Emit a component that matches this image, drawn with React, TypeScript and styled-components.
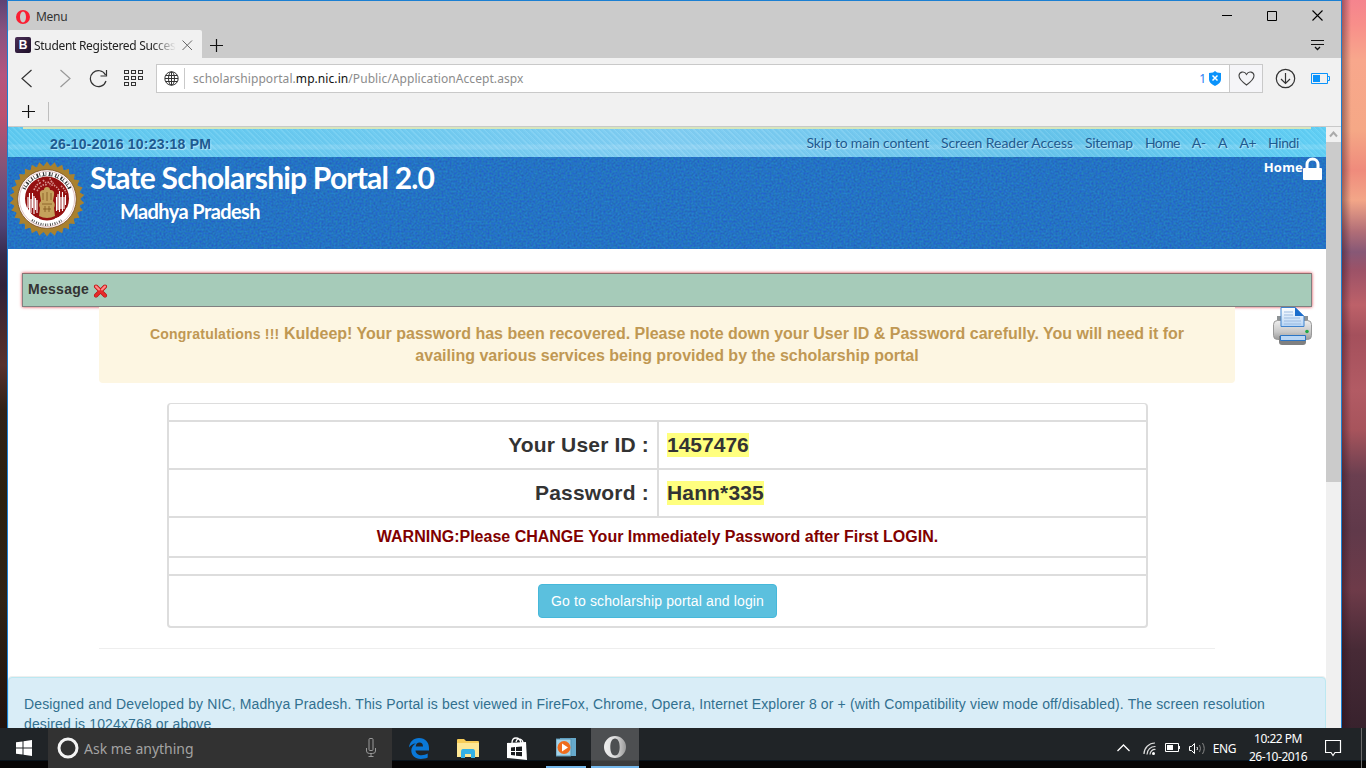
import React from "react";
import styled, { createGlobalStyle } from "styled-components";

const ui = '"Noto Sans", "Open Sans", sans-serif';
const arial = '"Liberation Sans", Arial, sans-serif';
const display = 'Lato, "Noto Sans", sans-serif';

const Global = createGlobalStyle`
  * { box-sizing: border-box; }
  html, body { margin: 0; height: 768px; overflow: hidden; }
  body { font-family: ${arial}; }
  svg { display: block; flex: none; }
`;

const Text = styled.span<{ $size: number; $font?: string; $spacing?: number; $weight?: number; $color?: string }>`
  font-family: ${(p) => p.$font ?? arial};
  font-size: ${(p) => p.$size}px;
  letter-spacing: ${(p) => p.$spacing ?? 0}px;
  font-weight: ${(p) => p.$weight ?? 400};
  color: ${(p) => p.$color ?? "inherit"};
  white-space: nowrap;
`;

const Desktop = styled.div`
  width: 1366px;
  height: 768px;
  display: flex;
  flex-direction: column;
  overflow: hidden;
`;
const Stage = styled.div`
  height: 728px;
  display: grid;
  grid-template-columns: 7px 1335px 24px;
`;
const WallLeft = styled.div`
  background: linear-gradient(#5d4374 0, #87527f 30px, #b4557f 75px, #bb5270 115px, #875477 165px, #504375 225px, #372b4c 255px, #30213a 285px, #4a2b2d 335px, #57312e 365px, #302218 410px, #2b200e 500px, #302316 600px, #21130d 728px);
`;
const WallRight = styled.div`
  background:
    linear-gradient(90deg, rgba(40, 10, 20, 0.4), transparent 9px),
    linear-gradient(#f5848e 0, #f88f8a 25px, #f8a78c 60px, #f5a886 130px, #ef8b7c 170px, #f3a688 200px, #b06d77 232px, #875876 252px, #9c5267 270px, #bd6169 305px, #a4505c 335px, #b25b64 390px, #a7545c 430px, #6b3f50 475px, #60394a 530px, #6e3b49 590px, #472a36 650px, #38222d 728px);
`;
const Window = styled.div`
  border: 1px solid #1b7fd2;
  border-bottom: 0;
  display: flex;
  flex-direction: column;
  background: #f1f1f1;
  min-height: 0;
  overflow: hidden;
`;
const TitleBar = styled.div`
  height: 29px;
  background: #cbcbcb;
  display: flex;
  align-items: center;
  padding: 2px 17px 0 8px;
  gap: 6px;
`;
const WindowButtons = styled.div`
  margin: -2px 0 0 auto;
  display: flex;
  gap: 34px;
`;
const TabRow = styled.div`
  height: 28px;
  background: #cbcbcb;
  display: flex;
  align-items: center;
`;
const Tab = styled.div`
  width: 194px;
  height: 28px;
  background: #f1f1f1;
  border-radius: 2px 2px 0 0;
  display: flex;
  align-items: center;
  padding: 2px 0 0 7px;
`;
const Favicon = styled.div`
  width: 16px;
  height: 16px;
  border-radius: 2px;
  background: linear-gradient(135deg, #4b2f57, #1d0f28);
  color: #fff;
  font: bold 12px/16px ${arial};
  text-align: center;
  margin-right: 3px;
`;
const TabTitle = styled.div`
  width: 142px;
  overflow: hidden;
  line-height: 18px;
  mask-image: linear-gradient(90deg, #000 118px, transparent 142px);
`;
const TabClose = styled.div` margin-left: 6px; `;
const NewTab = styled.div` padding: 3px 0 0 8px; `;
const TabMenu = styled.div` margin: 0 17px 0 auto; `;
const Toolbar = styled.div`
  height: 41px;
  display: flex;
  align-items: center;
  padding: 0 10px 0 12px;
`;
const NavIcons = styled.div`
  width: 136px;
  display: grid;
  grid-template-columns: 39px 30px 34px 20px;
  align-items: center;
`;
const AddressBar = styled.div`
  width: 1107px;
  height: 29px;
  border: 1px solid #c9c9c9;
  background: #fff;
  display: flex;
  align-items: center;
  color: #8c8c8c;
`;
const GlobeCell = styled.div`
  width: 28px;
  height: 21px;
  border-right: 1px solid #c9c9c9;
  display: flex;
  align-items: center;
  padding-left: 7px;
  margin-right: 8px;
`;
const Blocked = styled.div`
  margin-left: auto;
  display: flex;
  align-items: center;
  gap: 3px;
  margin-right: 8px;
`;
const HeartCell = styled.div`
  width: 33px;
  height: 27px;
  border-left: 1px solid #c9c9c9;
  background: #f5f5f8;
  display: grid;
  place-items: center;
`;
const BookmarkBar = styled.div`
  height: 28px;
  display: flex;
  align-items: center;
  padding: 0 14px 2px;
  border-bottom: 1px solid #c9c9c9;
`;
const BarDivider = styled.div`
  width: 1px;
  height: 19px;
  background: #bebebe;
  margin-left: 12px;
`;
const Viewport = styled.div`
  flex: 1;
  min-height: 0;
  display: flex;
`;
const Page = styled.div`
  width: 1318px;
  background: #fff;
  overflow: hidden;
`;
const ScrollTrack = styled.div`
  width: 15px;
  background: #f0f0f0;
`;
const ScrollUp = styled.div`
  height: 15px;
  display: grid;
  place-items: center;
`;
const ScrollThumb = styled.div`
  height: 340px;
  background: #cbcbcb;
`;
const TopStrip = styled.div`
  height: 30px;
  padding-top: 2px;
  background:
    linear-gradient(90deg, transparent 15px, #d6e6bd 15px 1303px, transparent 1303px) 0 0 / 100% 2px no-repeat,
    repeating-linear-gradient(45deg, rgba(255, 255, 255, 0.08) 0 1px, rgba(20, 120, 180, 0.05) 1px 3px, transparent 3px 4px),
    linear-gradient(transparent 17px, rgba(255, 255, 255, 0.13) 18px 22px, transparent 23px),
    linear-gradient(90deg, #60cbf1, #6fccf1 25%, #84cff3 50%, #69c6ec 80%, #62d0f5);
`;
const StripInner = styled.div`
  height: 28px;
  display: flex;
  align-items: center;
  padding: 2px 27px 0 42px;
  color: #1d5a90;
  text-shadow: 1px 1px 1px rgba(255, 255, 255, 0.5);
`;
const SkipLinks = styled.nav`
  margin: -4px 0 0 auto;
  display: flex;
  gap: 12px;
`;
const Header = styled.header`
  position: relative;
  height: 92px;
  background: #2573c5;
  color: #fff;
  display: flex;
  padding: 4px 4px 0 1px;
`;
const Grain = styled.svg`
  position: absolute;
  inset: 0;
  opacity: 0.2;
`;
const EmblemBox = styled.div` position: relative; `;
const Titles = styled.div`
  position: relative;
  display: flex;
  flex-direction: column;
  padding-left: 5px;
  margin-top: -1px;
  & > :first-child { line-height: 34px; }
  & > :last-child { line-height: 34px; padding-left: 30px; }
`;
const HomeLink = styled.div`
  position: relative;
  margin-left: auto;
  display: flex;
  height: 22px;
  margin-top: -4px;
  line-height: 21px;
`;
const MessageBar = styled.div`
  height: 34px;
  margin: 24px 14px 0;
  border: 1px solid #808080;
  border-top-color: #8f6d6d;
  box-shadow: 0 0 3px #dc3c46;
  background: #a6cbb9;
  display: flex;
  align-items: center;
  gap: 4px;
  padding: 0 0 2px 5px;
  color: #333;
`;
const DismissIcon = styled.svg` margin-top: 4px; `;
const NoticeRow = styled.div`
  display: flex;
  justify-content: space-between;
  padding: 0 14px 0 91px;
`;
const Notice = styled.div`
  width: 1136px;
  height: 76px;
  border-radius: 0 0 4px 4px;
  background: #fdf6e2;
  color: #c09853;
  text-align: center;
  padding-top: 16px;
  line-height: 22px;
`;
const Credentials = styled.table`
  width: 981px;
  height: 225px;
  margin: 20px 0 0 159px;
  border: 2px solid #ddd;
  border-top-width: 1px;
  border-radius: 4px;
  border-spacing: 0;
  color: #333;
  table-layout: fixed;
`;
const Row = styled.tr<{ $h: number }>`
  height: ${(p) => p.$h}px;
  &:not(:first-child) td { border-top: 2px solid #ddd; }
`;
const LabelColumn = styled.col` width: 488px; `;
const Cell = styled.td<{ $align?: string; $split?: boolean }>`
  padding: 0 8px;
  text-align: ${(p) => p.$align ?? "left"};
  border-left: ${(p) => (p.$split ? "2px solid #ddd" : "0")};
`;
const Mark = styled.mark`
  display: inline-block;
  background: #ffff7f;
  color: #333;
  height: 24px;
  line-height: 24px;
  vertical-align: middle;
`;
const LoginButton = styled.button`
  width: 239px;
  height: 34px;
  border: 1px solid #46b8da;
  border-radius: 4px;
  background: #5bc0de;
  color: #fff;
  padding: 0;
  display: block;
  margin: 0 auto;
`;
const Rule = styled.div`
  height: 1px;
  background: #eee;
  margin: 20px 111px 0 91px;
`;
const Footer = styled.footer`
  height: 90px;
  margin-top: 28px;
  border: 1px solid #bce8f1;
  box-shadow: 0 -1px 0 #eee;
  border-radius: 4px;
  background: #d9edf7;
  color: #31708f;
  padding: 16px 15px;
  line-height: 20px;
`;
const Taskbar = styled.div`
  height: 40px;
  display: flex;
  background: linear-gradient(#202427 32px, #0b2233 32px, #060505 33px);
  color: #fff;
`;
const Start = styled.div`
  width: 48px;
  display: grid;
  place-items: center;
`;
const Search = styled.div`
  width: 344px;
  background: #323232;
  display: flex;
  align-items: center;
  padding: 0 14px 0 9px;
  gap: 5px;
  color: #a3a3a3;
`;
const Mic = styled.div` margin-left: auto; `;
const AppSlot = styled.div<{ $w: number; $active?: boolean; $open?: boolean }>`
  width: ${(p) => p.$w}px;
  display: grid;
  place-items: center;
  background: ${(p) => (p.$active ? "linear-gradient(#4d4f51 32px, #3c3c3c 33px)" : "none")};
  border-bottom: ${(p) => (p.$open || p.$active ? "2px solid #76b9ed" : "0")};
`;
const Spacer = styled.div<{ $w: number }>` width: ${(p) => p.$w}px; `;
const Tray = styled.div`
  margin-left: auto;
  display: flex;
  align-items: center;
  padding-right: 19px;
`;
const TrayIcons = styled.div`
  display: flex;
  align-items: center;
  gap: 9px;
  margin-right: 7px;
  & > :first-child { margin-right: 4px; }
`;
const Clock = styled.div`
  width: 60px;
  margin: 0 17px 1px 12px;
  display: flex;
  flex-direction: column;
  align-items: center;
  line-height: 18px;
`;
const ShowDesktop = styled.div`
  width: 5px;
  border-left: 1px solid #6b6b6b;
`;

const Plus = () => (
  <svg width="14" height="14"><path d="M0 6.5H13M6.5 0V13" stroke="#111" strokeWidth="1.2" /></svg>
);

const skipLinks: [string, number][] = [
  ["Skip to main content", -0.2],
  ["Screen Reader Access", -0.05],
  ["Sitemap", -0.23],
  ["Home", -0.6],
  ["A-", -0.3],
  ["A", 0],
  ["A+", -0.5],
  ["Hindi", -0.4],
];

const Emblem = () => {
  const teeth = Array.from({ length: 60 }, (_, i) => {
    const a = (i * Math.PI) / 30;
    const r = i % 2 ? 33 : 37.5;
    return `${38 + r * Math.sin(a)},${38 - r * Math.cos(a)}`;
  }).join(" ");
  return (
    <svg width="76" height="76" viewBox="0 0 76 76">
      <polygon points={teeth} fill="#a9812f" />
      <circle cx="38" cy="38" r="33.5" fill="#a9812f" />
      <circle cx="38" cy="38" r="29.3" fill="#fff" stroke="#7a4a22" strokeWidth=".8" />
      <circle cx="38" cy="38" r="27.6" fill="none" stroke="#c99" strokeWidth=".6" />
      <path d="M15 28A25 25 0 0 1 61 28" fill="none" stroke="#333" strokeWidth="3.6" strokeDasharray="1.2 1.5 .7 2.6 1.6 1.3 .8 2.8" />
      <path d="M17 26.5A24.500 24.500 0 0 1 59 26.5" fill="none" stroke="#333" strokeWidth=".8" strokeDasharray="4 2.600" />
      <path d="M23 59A26 26 0 0 0 53 59" fill="none" stroke="#444" strokeWidth="2.600" strokeDasharray="1 1.300 .7 1.700" />
      <circle cx="38" cy="37.500" r="22" fill="#941010" />
      <path d="M25 29q3-7 7-7m-4 8q5-8 10-6m3-7q1 5 5 6m-12-4q3 4 6 2m10 8q-5-7-9-4m11 0q4 3 5 7M29 19l3 4m11-3l-3 4" stroke="#d99792" strokeWidth="1.600" fill="none" strokeDasharray="1.500 1.200" />
      <path d="M19 36v11m1.500-15v19m1.500-13v14m1.500-20v15m1.500-12v18m1.500-16v12m1.500-10v13M47.500 36v14m1.500-17v16m1.500-19v21m1.500-15v12m1.500-17v19m1.500-14v12m1.500-14v10" stroke="#fff" strokeWidth="1.100" />
      <path d="M17 47q4 10 13 12M59 47q-4 10-13 12" stroke="#fff" strokeWidth="3" fill="none" />
      <path d="M31 34q-1-5 4-5q0-3 3-3t3 3q5 0 4 5l-1 6q3 3 1 7l1 8q-8 4-16 0l1-8q-2-4 1-7z" fill="#c5a25c" />
      <path d="M34 32v7m4-8v9m4-8v7m-9 4h10m-9 5h8m-6-3v6m4-6v6" stroke="#80551f" strokeWidth=".8" />
    </svg>
  );
};

const Printer = () => (
  <svg width="39" height="39" viewBox="0 0 39 39">
    <defs>
      <linearGradient id="pb" x1="0" y1="0" x2="0" y2="1"><stop offset="0" stopColor="#eee" /><stop offset=".6" stopColor="#c8c8c8" /><stop offset="1" stopColor="#9a9a9a" /></linearGradient>
      <linearGradient id="pp" x1="0" y1="0" x2="0" y2="1"><stop offset="0" stopColor="#fff" /><stop offset="1" stopColor="#b5d4f5" /></linearGradient>
    </defs>
    <path d="M4 9h31v6H4z" fill="#8d9294" />
    <rect x=".5" y="13.500" width="38" height="19" rx="4" fill="url(#pb)" stroke="#999" />
    <path d="M8 .5h14l9 9v10H8z" fill="url(#pp)" stroke="#3f83ce" />
    <path d="M22 0v9h9z" fill="#1b6dcc" />
    <path d="M11 5h9M11 8h9M11 11h16M11 14h17M11 17h17" stroke="#9dbbe0" />
    <circle cx="34" cy="24.500" r="1.800" fill="#20a845" />
    <path d="M6 29h27v6q0 3-3 3H9q-3 0-3-3z" fill="#808080" />
    <path d="M7.500 28.500h25v5h-25z" fill="#b9d6f4" stroke="#2a75c5" />
  </svg>
);

export default function App() {
  return (
    <Desktop>
      <Global />
      <Stage>
        <WallLeft />
        <Window>
          <TitleBar>
            <svg width="14" height="14" viewBox="0 0 14 14"><path fillRule="evenodd" fill="#fa1e32" d="M7 0a7 7 0 1 0 0 14A7 7 0 0 0 7 0zM7 1.500c1.700 0 3 2.200 3 5.500s-1.300 5.500-3 5.500S4 10.300 4 7s1.300-5.500 3-5.500z" /></svg>
            <Text $size={12} $font={ui} $spacing={-0.3} $color="#333">Menu</Text>
            <WindowButtons>
              <svg width="11" height="11"><path d="M0 5.500H10" stroke="#000" /></svg>
              <svg width="11" height="11"><path d="M.5 1.500H9.500V10.500H.5z" fill="none" stroke="#000" /></svg>
              <svg width="12" height="11"><path d="M.5.5L10.500 10.500M10.500.5L.5 10.500" stroke="#000" strokeWidth="1.100" /></svg>
            </WindowButtons>
          </TitleBar>
          <TabRow>
            <Tab>
              <Favicon>B</Favicon>
              <TabTitle><Text $size={12} $font={ui} $spacing={-0.3} $color="#222">Student Registered Success</Text></TabTitle>
              <TabClose><svg width="11" height="11"><path d="M.5.5L10 10M10 .5L.5 10" stroke="#666" /></svg></TabClose>
            </Tab>
            <NewTab><Plus /></NewTab>
            <TabMenu>
              <svg width="13" height="13"><path d="M0 2.500H13M0 6.500H13" stroke="#111" /><path d="M4 9l2.500 2.500L9 9" fill="none" stroke="#111" strokeWidth="1.300" /></svg>
            </TabMenu>
          </TabRow>
          <Toolbar>
            <NavIcons>
              <svg width="13" height="19"><path d="M11.500 1L2 9.500l9.500 8.500" fill="none" stroke="#333" strokeWidth="1.200" /></svg>
              <svg width="13" height="19"><path d="M1.500 1L11 9.500 1.500 18" fill="none" stroke="#999" strokeWidth="1.200" /></svg>
              <svg width="19" height="19"><path d="M16.500 6A8 8 0 1 0 17 12M17.500 1v6h-6" fill="none" stroke="#333" strokeWidth="1.200" /></svg>
              <svg width="20" height="17">
                {[0, 1, 2].flatMap((r) => [0, 1, 2].map((c) => r === 2 && c === 2 ? null : <rect key={`${r}${c}`} x={c * 7 + 1.5} y={r * 6 + 0.5} width="4" height="3" fill="none" stroke="#333" />))}
              </svg>
            </NavIcons>
            <AddressBar>
              <GlobeCell>
                <svg width="15" height="15"><g fill="none" stroke="#333" strokeWidth="1"><circle cx="7.500" cy="7.500" r="6.700" /><ellipse cx="7.500" cy="7.500" rx="3" ry="6.700" /><path d="M7.500 1v13M1 7.500h13M2 4.500h11M2 10.500h11" /></g></svg>
              </GlobeCell>
              <Text $size={12} $font={ui} $spacing={0.07}>scholarshipportal.<Text $size={12} $font={ui} $spacing={0.07} $color="#111">mp.nic.in</Text>/Public/ApplicationAccept.aspx</Text>
              <Blocked>
                <Text $size={12} $font={ui} $color="#2b7cf5">1</Text>
                <svg width="12" height="15"><path d="M6 0l2 1.500L12 2v6.500q0 3.500-6 6.500-6-3-6-6.500V2l4-.5z" fill="#0a93fb" /><path d="M3.500 4.500l5 5m0-5l-5 5" stroke="#fff" strokeWidth="1.500" /></svg>
              </Blocked>
              <HeartCell><svg width="17" height="15"><path d="M8.500 14Q1 8.500 1 4.800C1 .8 6.300-.6 8.500 3.400 10.700-.6 16 .8 16 4.800 16 8.500 8.500 14 8.500 14z" fill="none" stroke="#444" strokeWidth="1.100" /></svg></HeartCell>
            </AddressBar>
            <Spacer $w={12} />
            <svg width="21" height="21"><g fill="none" stroke="#333" strokeWidth="1.200"><circle cx="10.500" cy="10.500" r="9.200" /><path d="M10.500 5v10M6 11l4.500 4.500L15 11" /></g></svg>
            <Spacer $w={15} />
            <svg width="19" height="11"><path d="M.5.5h16v10H.5zM17 3.500h1.500v4H17" fill="none" stroke="#0a93fb" /><path d="M2 2h7v7H2z" fill="#0a93fb" /></svg>
          </Toolbar>
          <BookmarkBar><Plus /><BarDivider /></BookmarkBar>
          <Viewport>
            <Page>
              <TopStrip>
                <StripInner>
                  <Text $size={14} $weight={700} $spacing={0.21}>26-10-2016 10:23:18 PM</Text>
                  <SkipLinks>
                    {skipLinks.map(([label, spacing]) => (
                      <Text key={label} $size={14} $font={display} $spacing={spacing}>{label}</Text>
                    ))}
                  </SkipLinks>
                </StripInner>
              </TopStrip>
              <Header>
                <Grain width="1318" height="92">
                  <filter id="grain" colorInterpolationFilters="sRGB"><feTurbulence type="fractalNoise" baseFrequency=".5" numOctaves="2" /><feColorMatrix values="0 0 0 0 .14  0 1.200 0 0 -.15  0 0 1 0 .25  0 0 0 0 1" /></filter>
                  <rect width="1318" height="92" filter="url(#grain)" />
                </Grain>
                <EmblemBox><Emblem /></EmblemBox>
                <Titles>
                  <Text $size={30} $font={display} $weight={700} $spacing={-0.8}>State Scholarship Portal 2.0</Text>
                  <Text $size={20} $font={display} $weight={700} $spacing={-0.59}>Madhya Pradesh</Text>
                </Titles>
                <HomeLink>
                  <Text $size={13} $font={ui} $weight={700} $spacing={0.2}>Home</Text>
                  <svg width="19" height="23" viewBox="0 0 19 23"><path d="M4 12V7.500a5.500 5.500 0 0 1 11 0V12" fill="none" stroke="#fff" strokeWidth="3" /><rect x="0" y="11" width="19" height="12" rx="1" fill="#fff" /></svg>
                </HomeLink>
              </Header>
              <MessageBar>
                <Text $size={14} $weight={700} $spacing={0.28}>Message</Text>
                <DismissIcon width="15" height="14"><path d="M3 2.500l9 9M12 2.500l-9 9" stroke="#b41010" strokeWidth="4" strokeLinecap="round" /><path d="M3 2.500l9 9M12 2.500l-9 9" stroke="#e62a2a" strokeWidth="3" strokeLinecap="round" /><path d="M3 2.500l3 3M12 2.500l-3 3" stroke="#ff8a8a" strokeWidth="2" strokeLinecap="round" /></DismissIcon>
              </MessageBar>
              <NoticeRow>
                <Notice>
                  <Text $size={14} $weight={700} $spacing={0.23}>Congratulations !!!</Text>{" "}
                  <Text $size={16} $weight={700}>Kuldeep! Your password has been recovered. Please note down your User ID &amp; Password carefully. You will need it for</Text>
                  <br />
                  <Text $size={16} $weight={700}>availing various services being provided by the scholarship portal</Text>
                </Notice>
                <Printer />
              </NoticeRow>
              <Credentials>
                <colgroup><LabelColumn /><col /></colgroup>
                <tbody>
                  <Row $h={16}><Cell colSpan={2} /></Row>
                  <Row $h={48}>
                    <Cell $align="right"><Text $size={21} $weight={700} $spacing={0.17}>Your User ID :</Text></Cell>
                    <Cell $split><Mark><Text $size={21} $weight={700}>1457476</Text></Mark></Cell>
                  </Row>
                  <Row $h={48}>
                    <Cell $align="right"><Text $size={21} $weight={700} $spacing={0.2}>Password :</Text></Cell>
                    <Cell $split><Mark><Text $size={21} $weight={700} $spacing={0.15}>Hann*335</Text></Mark></Cell>
                  </Row>
                  <Row $h={40}><Cell colSpan={2} $align="center"><Text $size={16} $weight={700} $color="#800000">WARNING:Please CHANGE Your Immediately Password after First LOGIN.</Text></Cell></Row>
                  <Row $h={18}><Cell colSpan={2} /></Row>
                  <Row $h={52}><Cell colSpan={2}><LoginButton><Text $size={14} $spacing={0.13}>Go to scholarship portal and login</Text></LoginButton></Cell></Row>
                </tbody>
              </Credentials>
              <Rule />
              <Footer>
                <Text $size={14} $spacing={0.131}>Designed and Developed by NIC, Madhya Pradesh. This Portal is best viewed in FireFox, Chrome, Opera, Internet Explorer 8 or + (with Compatibility view mode off/disabled). The screen resolution</Text>
                <br />
                <Text $size={14} $spacing={0.131}>desired is 1024x768 or above</Text>
              </Footer>
            </Page>
            <ScrollTrack>
              <ScrollUp><svg width="9" height="7"><path d="M1 5.500l3.500-4L8 5.500" fill="none" stroke="#aaa" strokeWidth="2" /></svg></ScrollUp>
              <ScrollThumb />
            </ScrollTrack>
          </Viewport>
        </Window>
        <WallRight />
      </Stage>
      <Taskbar>
        <Start><svg width="16" height="16"><path d="M0 2.300L6.500 1.400V7.500H0zM7.500 1.200L16 0V7.500H7.500zM0 8.500H6.500V14.600L0 13.700zM7.500 8.500H16V16L7.500 14.800z" fill="#fff" /></svg></Start>
        <Search>
          <svg width="22" height="22"><circle cx="11" cy="11" r="9" fill="none" stroke="#f4f4f4" strokeWidth="3" /></svg>
          <Text $size={14} $font={ui}>Ask me anything</Text>
          <Mic><svg width="13" height="20"><g fill="none" stroke="#999"><rect x="4" y=".5" width="4" height="12" rx="1" /><path d="M1.500 10v3q0 2.500 3 2.500h3q3 0 3-2.500v-3M6 16v3M3.500 18.500h5" /></g></svg></Mic>
        </Search>
        <Spacer $w={3} />
        <AppSlot $w={48}><svg width="20" height="21" viewBox="0 0 20 21"><path fill="#0a78d7" d="M0 9.500C.5 4 4.500 0 10 0c6.500 0 10 4.500 10 10v2.500H6.500c.2 3 2.800 4.800 6 4.800 2.300 0 4.300-.6 6.200-1.700v4c-2 1-4.300 1.400-6.900 1.400C6 21 2.300 17.300 2.300 12.600c0-3.200 1.700-5.800 4.500-7.200C4 5.500 1.500 7 0 9.500zM6.700 8.500h7.300c0-2.600-1.300-4-3.500-4S7 6 6.700 8.500z" /></svg></AppSlot>
        <AppSlot $w={49}><svg width="22" height="19"><path d="M0 1q0-1 1-1h6l2 2h12q1 0 1 1v15H0z" fill="#f7cc58" /><path d="M0 4h22v14H0z" fill="#fee795" /><path d="M4 18v-5q0-3 2-3h10q2 0 2 3v6h-4v-4H8v4H4z" fill="#33b1e6" /></svg></AppSlot>
        <AppSlot $w={49}><svg width="22" height="23"><path d="M6 6Q6 1 10 1t5 5M10 5Q11 1 14 2t3 4" fill="none" stroke="#fff" strokeWidth="1.300" /><path d="M1 6l19-1 1 18-20-2z" fill="#fff" /><path d="M5 10.500l4-.4v4H5zM10 10l6-.6V14h-6zM5 15h4v3.500l-4-.4zM10 15h6v4.300l-6-.6z" fill="#1b1d1f" /></svg></AppSlot>
        <Spacer $w={5} />
        <AppSlot $w={40} $open><svg width="20" height="20"><path d="M4 1h16v18H4z" fill="#66a9cb" /><path d="M0 2h15v17H0z" fill="#a4d3e8" stroke="#5793b3" /><circle cx="8" cy="10.500" r="6.500" fill="#ef6c1c" /><path d="M6 6.500l6 4-6 4z" fill="#fff" /></svg></AppSlot>
        <Spacer $w={5} />
        <AppSlot $w={48} $active><svg width="24" height="24"><defs><linearGradient id="og"><stop offset="0" stopColor="#eee" /><stop offset=".5" stopColor="#ddd" /><stop offset="1" stopColor="#999" /></linearGradient></defs><path fillRule="evenodd" fill="url(#og)" d="M12 1a11 11 0 1 0 0 22A11 11 0 0 0 12 1zM12 3.500c3 0 4.700 3.500 4.700 8.500s-1.700 8.500-4.700 8.500-4.700-3.500-4.700-8.500S9 3.500 12 3.500z" /></svg></AppSlot>
        <Tray>
          <TrayIcons>
            <svg width="13" height="8"><path d="M.5 7l6-6 6 6" fill="none" stroke="#fff" strokeWidth="1.300" /></svg>
            <svg width="13" height="13"><g fill="none" stroke="#ddd" strokeWidth="1.200"><path d="M1 12A11 11 0 0 1 12 1M4 12.500A8 8 0 0 1 12.500 4.500M7 12.500A5 5 0 0 1 12.500 7.500" /></g><circle cx="10.500" cy="11.500" r="1.500" fill="#fff" /></svg>
            <svg width="15" height="10"><path d="M.5.500h13v8H.500zM14.500 3v3" fill="none" stroke="#fff" /><path d="M2 2h6v5H2z" fill="#fff" /></svg>
            <svg width="17" height="13"><path d="M.5 4.500h2l3-3v10l-3-3h-2z" fill="none" stroke="#fff" /><path d="M8 5q1 1.500 0 3" fill="none" stroke="#fff" /><path d="M10.500 3q2 3.500 0 7M13.500 1q3.500 5.500 0 11" fill="none" stroke="#888" /></svg>
          </TrayIcons>
          <Text $size={12} $font={ui} $spacing={-0.4}>ENG</Text>
          <Clock>
            <Text $size={12} $font={ui} $spacing={-0.5}>10:22 PM</Text>
            <Text $size={12} $font={ui} $spacing={-0.45}>26-10-2016</Text>
          </Clock>
          <svg width="17" height="17"><path d="M.5.5h15v12H10l-2 3-2-3H.500z" fill="none" stroke="#fff" strokeWidth="1.200" /></svg>
        </Tray>
        <ShowDesktop />
      </Taskbar>
    </Desktop>
  );
}
